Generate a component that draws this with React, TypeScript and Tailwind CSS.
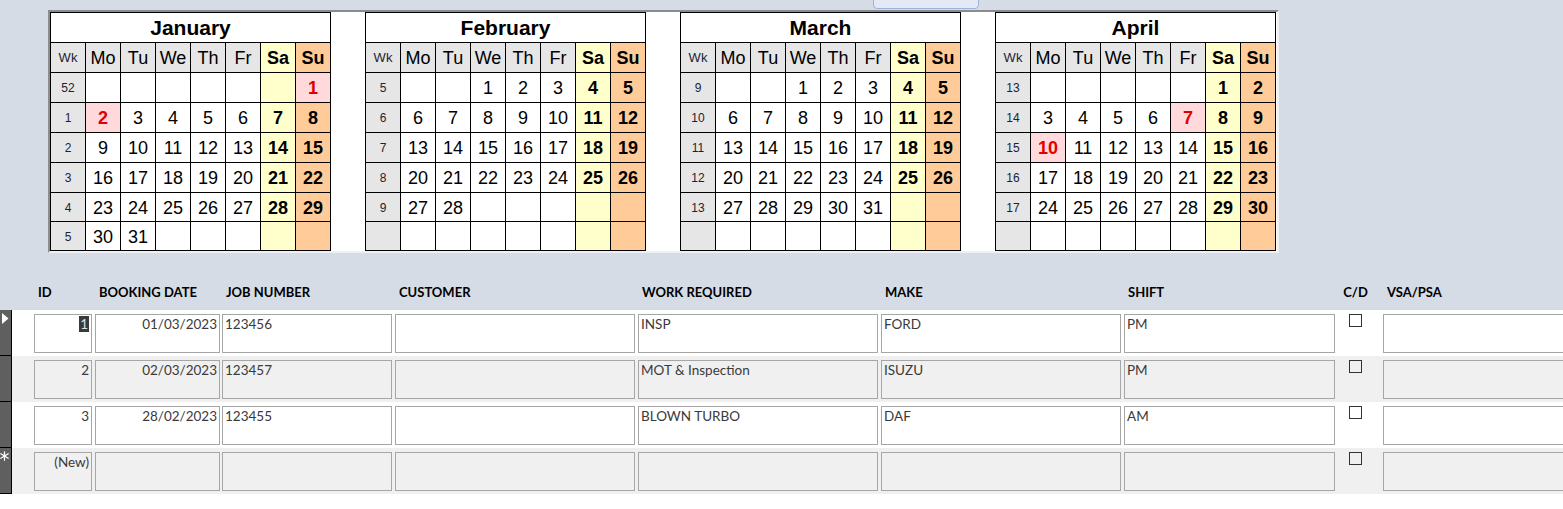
import React from "react";

type Week = { wk: number | null; days: number[] };
type Month = { name: string; weeks: Week[]; hol: number[] };

const run = (s: number) => Array.from({ length: 7 }, (_, i) => s + i);
const blank = [0, 0, 0, 0, 0, 0, 0];

const months: Month[] = [
  {
    name: "January",
    hol: [1, 2],
    weeks: [
      { wk: 52, days: [0, 0, 0, 0, 0, 0, 1] },
      { wk: 1, days: run(2) },
      { wk: 2, days: run(9) },
      { wk: 3, days: run(16) },
      { wk: 4, days: run(23) },
      { wk: 5, days: [30, 31, 0, 0, 0, 0, 0] },
    ],
  },
  {
    name: "February",
    hol: [],
    weeks: [
      { wk: 5, days: [0, 0, 1, 2, 3, 4, 5] },
      { wk: 6, days: run(6) },
      { wk: 7, days: run(13) },
      { wk: 8, days: run(20) },
      { wk: 9, days: [27, 28, 0, 0, 0, 0, 0] },
      { wk: null, days: blank },
    ],
  },
  {
    name: "March",
    hol: [],
    weeks: [
      { wk: 9, days: [0, 0, 1, 2, 3, 4, 5] },
      { wk: 10, days: run(6) },
      { wk: 11, days: run(13) },
      { wk: 12, days: run(20) },
      { wk: 13, days: [27, 28, 29, 30, 31, 0, 0] },
      { wk: null, days: blank },
    ],
  },
  {
    name: "April",
    hol: [7, 10],
    weeks: [
      { wk: 13, days: [0, 0, 0, 0, 0, 1, 2] },
      { wk: 14, days: run(3) },
      { wk: 15, days: run(10) },
      { wk: 16, days: run(17) },
      { wk: 17, days: run(24) },
      { wk: null, days: blank },
    ],
  },
];

const rowH = ["h-[30px]", "h-[30px]", "h-[30px]", "h-[30px]", "h-[29px]", "h-[29px]"];
const dayNames = ["Mo", "Tu", "We", "Th", "Fr", "Sa", "Su"];

function Calendar({ m }: { m: Month }) {
  const cell = "border-r border-b border-black flex items-center justify-center";
  return (
    <div className="grid grid-cols-[repeat(8,35px)] w-[281px] border-l border-t border-black font-['Liberation_Sans',Arial,sans-serif] text-black shrink-0">
      <div className={`${cell} col-span-8 h-[30px] pt-[1px] bg-white text-[21px] font-bold`}>{m.name}</div>
      <div className={`${cell} h-[30px] pt-[1px] bg-[#e6e6e6] text-[13px] text-[#1c2233]`}>Wk</div>
      {dayNames.map((d, i) => (
        <div
          key={d}
          className={`${cell} h-[30px] pt-[2px] text-[18px] ${
            i === 5 ? "bg-[#ffffcc] font-bold" : i === 6 ? "bg-[#ffcc99] font-bold" : "bg-[#e6e6e6]"
          }`}
        >
          {d}
        </div>
      ))}
      {m.weeks.map((w, r) => (
        <React.Fragment key={r}>
          <div className={`${cell} ${rowH[r]} pt-[1px] bg-[#e6e6e6] text-[12px] text-[#1c2233]`}>{w.wk ?? ""}</div>
          {w.days.map((d, i) => {
            const hol = d > 0 && m.hol.includes(d);
            let bg = i === 5 ? "bg-[#ffffcc]" : i === 6 ? "bg-[#ffcc99]" : "bg-white";
            if (hol) bg = "bg-[#ffd9dc]";
            const weight = i >= 5 || hol ? "font-bold" : "";
            const color = hol ? "text-[#e00000]" : "text-black";
            return (
              <div key={i} className={`${cell} ${rowH[r]} pt-[2px] ${bg} ${weight} ${color} text-[18px]`}>
                {d > 0 ? d : ""}
              </div>
            );
          })}
        </React.Fragment>
      ))}
    </div>
  );
}

const cols = [
  { key: "id", w: "w-[58px]", ml: "ml-[22px]", label: "ID", right: true },
  { key: "date", w: "w-[125px]", ml: "ml-[3px]", label: "BOOKING DATE", right: true },
  { key: "job", w: "w-[170px]", ml: "ml-[2px]", label: "JOB NUMBER" },
  { key: "cust", w: "w-[240px]", ml: "ml-[3px]", label: "CUSTOMER" },
  { key: "work", w: "w-[240px]", ml: "ml-[3px]", label: "WORK REQUIRED" },
  { key: "make", w: "w-[240px]", ml: "ml-[3px]", label: "MAKE" },
  { key: "shift", w: "w-[211px]", ml: "ml-[3px]", label: "SHIFT" },
  { key: "cd", w: "w-[13px]", ml: "ml-[14px]", label: "C/D", check: true },
  { key: "vsa", w: "w-[300px]", ml: "ml-[21px]", label: "VSA/PSA" },
];

type Rec = Record<string, string>;
const records: (Rec & { kind: string })[] = [
  { kind: "current", id: "1", date: "01/03/2023", job: "123456", cust: "", work: "INSP", make: "FORD", shift: "PM", vsa: "" },
  { kind: "alt", id: "2", date: "02/03/2023", job: "123457", cust: "", work: "MOT & Inspection", make: "ISUZU", shift: "PM", vsa: "" },
  { kind: "normal", id: "3", date: "28/02/2023", job: "123455", cust: "", work: "BLOWN TURBO", make: "DAF", shift: "AM", vsa: "" },
  { kind: "new", id: "(New)", date: "", job: "", cust: "", work: "", make: "", shift: "", vsa: "" },
];

function Arrow() {
  return (
    <svg className="absolute left-[2px] top-[3px]" width="7" height="11" viewBox="0 0 7 11">
      <polygon points="0,0 6.5,5.5 0,11" fill="#ffffff" />
    </svg>
  );
}

function Star() {
  return (
    <svg className="absolute left-0 top-[3px]" width="9" height="10" viewBox="0 0 9 10">
      <g stroke="#ffffff" strokeWidth="1.3" strokeLinecap="round">
        <line x1="4.5" y1="0.8" x2="4.5" y2="9.2" />
        <line x1="0.8" y1="2.8" x2="8.2" y2="7.2" />
        <line x1="0.8" y1="7.2" x2="8.2" y2="2.8" />
      </g>
    </svg>
  );
}

function RecordRow({ r }: { r: Rec & { kind: string } }) {
  const gray = r.kind === "alt" || r.kind === "new";
  const rowBg = gray ? "bg-[#f0f0f0]" : "bg-white";
  return (
    <div className={`flex h-[46px] ${rowBg}`}>
      <div className="relative w-[12px] h-full shrink-0 bg-[#5f5f5f] border-r border-b border-black">
        {r.kind === "current" && <Arrow />}
        {r.kind === "new" && <Star />}
      </div>
      {cols.map((c) =>
        c.check ? (
          <div key={c.key} className={`${c.ml} ${c.w} shrink-0 mt-[4px]`}>
            <div className="w-[13px] h-[13px] border border-[#333333]" />
          </div>
        ) : (
          <div
            key={c.key}
            className={`${c.ml} ${c.w} shrink-0 mt-[4px] h-[39px] border border-[#a6a6a6] ${rowBg} pt-[1px] px-[2px] text-[13.5px] leading-[17px] text-[#3a3a3a] whitespace-nowrap overflow-hidden ${
              c.right ? "text-right" : "text-left"
            }`}
          >
            {r.kind === "current" && c.key === "id" ? (
              <span className="bg-[#3a3a3a] text-[#d8e0ea] px-[1px]">{r[c.key]}</span>
            ) : (
              r[c.key]
            )}
          </div>
        )
      )}
    </div>
  );
}

export default function App() {
  return (
    <div className="w-[1563px] h-[509px] overflow-hidden bg-white font-['Lato',sans-serif]">
      <div className="relative h-[310px] bg-[#d6dce5]">
        <div className="absolute left-[873px] top-[-12px] w-[106px] h-[21px] rounded-[4px] border border-[#9db3dc] bg-[#e3eaf6]" />
        <div className="relative pt-[10px] pl-[48px]">
          <div className="w-[1231px] h-[243px] border-2 border-t-[#8c8c8c] border-l-[#8c8c8c] border-b-[#eef0f3] border-r-[#eef0f3] bg-white flex gap-[34px]">
            {months.map((m) => (
              <Calendar key={m.name} m={m} />
            ))}
          </div>
        </div>
        <div className="flex mt-[31px] h-[16px] leading-[16px] text-[13px] font-bold text-black">
          <div className="w-[12px] shrink-0" />
          {cols.map((c) => (
            <div
              key={c.key}
              className={`${c.ml} ${c.w} shrink-0 whitespace-nowrap ${c.check ? "flex justify-center" : "pl-[4px]"}`}
            >
              {c.label}
            </div>
          ))}
        </div>
      </div>
      {records.map((r, i) => (
        <RecordRow key={i} r={r} />
      ))}
    </div>
  );
}
